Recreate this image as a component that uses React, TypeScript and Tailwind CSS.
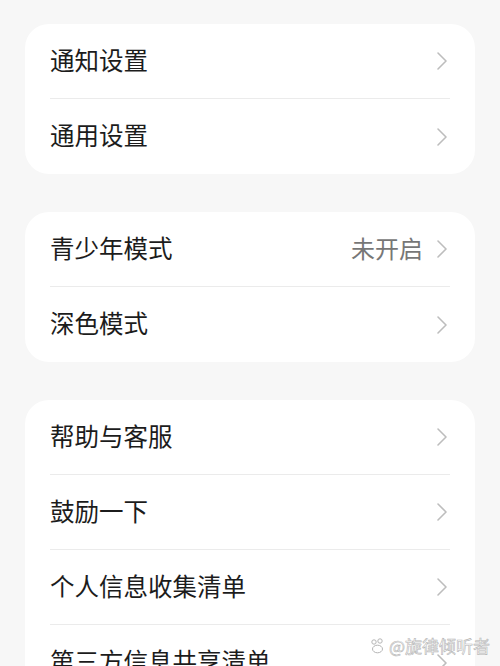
import React from 'react';

type Row = { label: string; value?: string };

const groups: Row[][] = [
  [{ label: '通知设置' }, { label: '通用设置' }],
  [{ label: '青少年模式', value: '未开启' }, { label: '深色模式' }],
  [
    { label: '帮助与客服' },
    { label: '鼓励一下' },
    { label: '个人信息收集清单' },
    { label: '第三方信息共享清单' },
  ],
];

const Chevron = () => (
  <svg width="12" height="20" viewBox="0 0 12 20" fill="none" className="shrink-0">
    <path d="M2 2l8 8-8 8" stroke="#bdbdbd" strokeWidth="1.6" strokeLinecap="round" strokeLinejoin="round" />
  </svg>
);

export default function App() {
  return (
    <div
      className="relative w-[500px] h-[666px] overflow-hidden bg-[#f7f7f7] pt-[24px] px-[25px] flex flex-col gap-[38px]"
      style={{ fontFamily: '"Noto Sans CJK SC", "Noto Sans", sans-serif' }}
    >
      {groups.map((rows, gi) => (
        <div key={gi} className="bg-white rounded-[24px] px-[25px] shrink-0">
          {rows.map((row, ri) => (
            <div
              key={row.label}
              className={`h-[75px] flex items-center justify-between ${
                ri < rows.length - 1 ? 'border-b border-[#ebebeb]' : ''
              }`}
            >
              <span className="text-[24.5px] leading-none text-[#1c1c1c] -mt-[2px]">{row.label}</span>
              <div className="flex items-center gap-[13px] pr-[2px]">
                {row.value && <span className="text-[24px] leading-none text-[#777777] -mt-[2px]">{row.value}</span>}
                <Chevron />
              </div>
            </div>
          ))}
        </div>
      ))}

      {/* watermark */}
      <div
        className="absolute right-[10px] top-[637px] flex items-center gap-[3px] text-[17px] leading-none text-white/90"
        style={{ WebkitTextStroke: '0.6px #b5b5b5' }}
      >
        <svg width="16" height="16" viewBox="0 0 16 16" fill="white" stroke="#b5b5b5" strokeWidth="1">
          <circle cx="4" cy="4" r="2.2" />
          <circle cx="10" cy="3" r="2.2" />
          <ellipse cx="7.5" cy="11" rx="5" ry="3.8" />
        </svg>
        <span>@旋律倾听者</span>
      </div>
    </div>
  );
}
